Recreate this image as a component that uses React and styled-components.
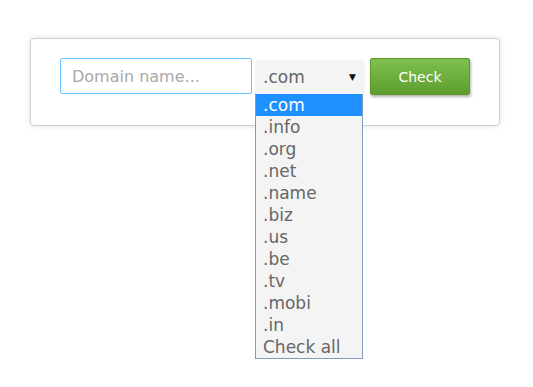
import React from 'react'
import styled, { createGlobalStyle } from 'styled-components'

const GlobalStyle = createGlobalStyle`
    html, body {
        margin: 0;
        min-height: 100%;
        background: #fff;
        font-family: "DejaVu Sans", Verdana, sans-serif;
    }
`

export const Page = styled.div`
    min-height: 100vh;
    box-sizing: border-box;
    padding: 38px 30px;
`

export const Card = styled.div`
    width: 470px;
    box-sizing: border-box;
    border: 1px solid #cfcfcf;
    border-radius: 4px;
    box-shadow: 0 0 6px rgba(0, 0, 0, 0.12);
    padding: 19px 29px 30px;
`

export const Row = styled.form`
    display: flex;
    align-items: flex-start;
`

export const DomainInput = styled.input`
    width: 192px;
    height: 36px;
    box-sizing: border-box;
    border: 1px solid #66ccff;
    border-radius: 2px;
    padding: 0 11px;
    font-family: "DejaVu Sans", Verdana, sans-serif;
    font-size: 16px;
    color: #555;
    outline: none;

    &::placeholder {
        color: #a9a9a9;
    }
`

export const SelectWrap = styled.div`
    position: relative;
    margin-left: 3px;
    margin-top: 2px;
`

export const SelectBox = styled.div`
    width: 110px;
    height: 34px;
    box-sizing: border-box;
    display: flex;
    align-items: center;
    justify-content: space-between;
    padding: 0 9px 0 8px;
    background: #f4f4f4;
    border-radius: 4px 4px 0 0;
    color: #666;
    font-size: 17px;
`

export const Arrow = styled.span`
    color: #111;
    font-size: 9px;
`

export const Options = styled.ul`
    position: absolute;
    top: 34px;
    left: 0;
    width: 108px;
    box-sizing: border-box;
    margin: 0;
    padding: 0;
    list-style: none;
    background: #f4f4f4;
    border: 1px solid #7f9db9;
    border-top: none;
    z-index: 5;
`

export const Option = styled.li`
    height: 22px;
    line-height: 22px;
    padding-left: 7px;
    font-size: 17px;
    color: ${({ $active }) => ($active ? '#fff' : '#666')};
    background: ${({ $active }) => ($active ? '#1e90ff' : 'transparent')};
    white-space: nowrap;
`

export const CheckButton = styled.button`
    margin-left: 5px;
    width: 100px;
    height: 37px;
    box-sizing: border-box;
    border: 1px solid #5b9a2f;
    border-radius: 2px;
    background: linear-gradient(#80c050, #5e9e2e);
    box-shadow: 1px 2px 3px rgba(0, 0, 0, 0.3);
    color: #fff;
    font-family: "DejaVu Sans", Verdana, sans-serif;
    font-size: 14px;
    cursor: pointer;
`

const tlds = ['.com', '.info', '.org', '.net', '.name', '.biz', '.us', '.be', '.tv', '.mobi', '.in', 'Check all']

export default function App() {
    return (
        <Page>
            <GlobalStyle />
            <Card>
                <Row onSubmit={(e) => e.preventDefault()}>
                    <DomainInput placeholder="Domain name..." />
                    <SelectWrap>
                        <SelectBox>
                            <span>.com</span>
                            <Arrow>▼</Arrow>
                        </SelectBox>
                        <Options>
                            {tlds.map((t, i) => (
                                <Option key={t} $active={i === 0}>{t}</Option>
                            ))}
                        </Options>
                    </SelectWrap>
                    <CheckButton type="submit">Check</CheckButton>
                </Row>
            </Card>
        </Page>
    )
}
